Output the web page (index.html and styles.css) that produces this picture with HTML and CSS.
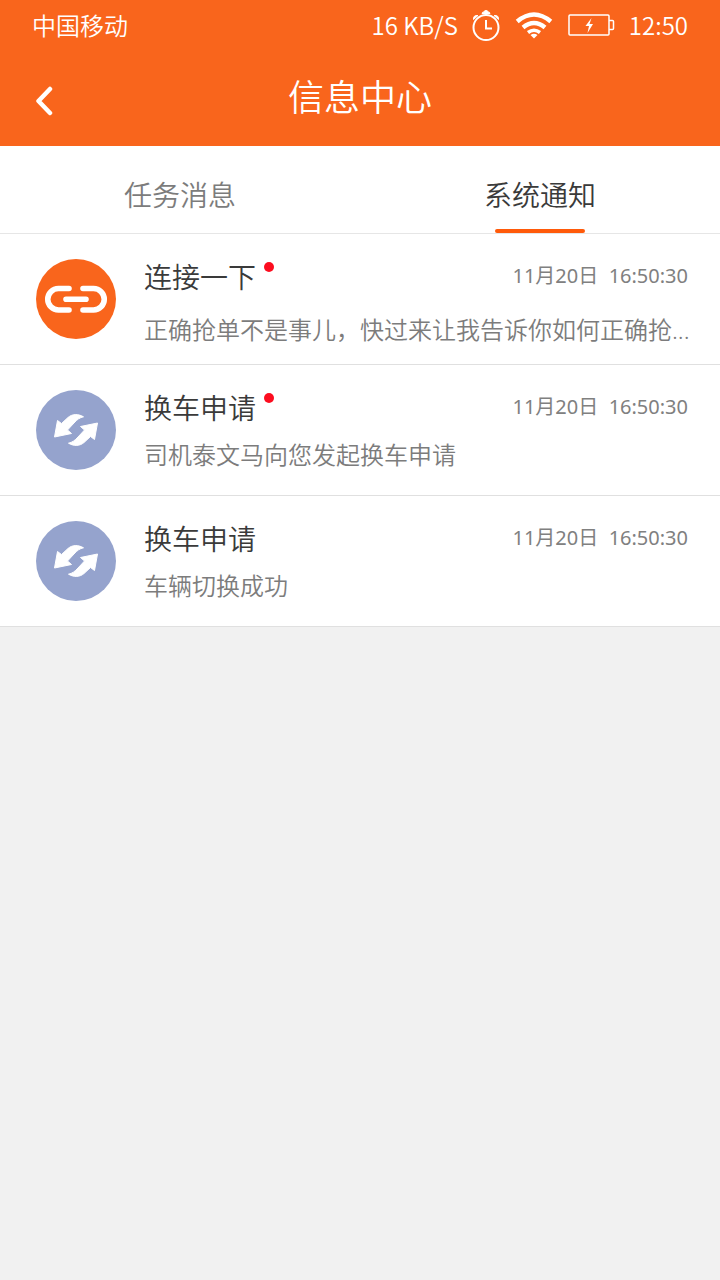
FILE: index.html
```
<!DOCTYPE html>
<html lang="zh-CN">
<head>
<meta charset="utf-8">
<meta name="viewport" content="width=device-width, initial-scale=1">
<title>信息中心</title>
<link rel="stylesheet" href="styles.css">
</head>
<body>
<header class="header">
  <div class="status">
    <span>中国移动</span>
    <div class="status-right">
      <span>16 KB/S</span>
      <svg class="clock" width="28" height="32" viewBox="0 0 28 32" aria-hidden="true">
        <g fill="none" stroke="#fff" stroke-width="2">
          <circle cx="14" cy="18.500" r="12.500"/>
          <path d="M14 11v8.500h6"/>
        </g>
        <path d="M10 4.500Q10 3 12 3Q12 1.500 14 1.500T16 3Q18 3 18 4.500ZM1.500 10.500Q1 6 6 6.500ZM26.500 10.500Q27 6 22 6.500Z" fill="#fff" stroke="#fff" stroke-linejoin="round"/>
      </svg>
      <svg class="wifi" width="38" height="28" viewBox="0 0 38 28" aria-hidden="true">
        <g fill="none" stroke="#fff" stroke-width="4.500">
          <path d="M2.200 10.500Q19-3.500 35.800 10.500"/>
          <path d="M8 16.500Q19 7.500 30 16.500"/>
          <path d="M13 21.500Q19 17 25 21.500" stroke-width="3.500"/>
        </g>
        <path d="M15.500 24Q19 21.500 22.500 24L19 27.500Z" fill="#fff"/>
      </svg>
      <svg class="battery" width="48" height="24" viewBox="0 0 48 24" aria-hidden="true">
        <rect x="2" y="2" width="40" height="20" rx="1" fill="none" stroke="#fff" stroke-width="1.500"/>
        <path d="M42 7.500h3.500q1 0 1 1v7q0 1-1 1H42" fill="none" stroke="#fff" stroke-width="1.500"/>
        <path d="M24.500 5L18.500 13h3.500L20.500 20L26 11h-3.500Z" fill="#fff"/>
      </svg>
      <span>12:50</span>
    </div>
  </div>
  <div class="titlebar">
    <button class="back" type="button" aria-label="返回">
      <svg width="18" height="30" viewBox="0 0 18 30" aria-hidden="true"><path d="M15 3L3.500 15L15 27" fill="none" stroke="#fff" stroke-width="4.500" stroke-linecap="round" stroke-linejoin="round"/></svg>
    </button>
    <h1 class="title">信息中心</h1>
  </div>
</header>
<nav class="tabs">
  <a class="tab" href="#tasks">任务消息</a>
  <a class="tab active" href="#system" aria-current="page">系统通知</a>
</nav>
<main class="list">
  <article class="item">
    <svg class="avatar" viewBox="0 0 80 80" aria-hidden="true">
      <circle cx="40" cy="40" r="40" fill="#f9651c"/>
      <path d="M33 29.500H22.500A10.500 10.500 0 0 0 22.500 51H33M47 29.500H57.500A10.500 10.500 0 0 1 57.500 51H47M30 40.200H50" fill="none" stroke="#fff" stroke-width="5.600" stroke-linecap="round"/>
    </svg>
    <div class="body">
      <div class="row"><h2 class="name unread">连接一下</h2><time class="time">11月20日&nbsp; 16:50:30</time></div>
      <p class="text spaced">正确抢单不是事儿，快过来让我告诉你如何正确抢...</p>
    </div>
  </article>
  <article class="item">
    <svg class="avatar" viewBox="0 0 80 80" aria-hidden="true">
      <circle cx="40" cy="40" r="40" fill="#95a3cd"/>
      <g id="swap" fill="#fff" stroke="#fff" stroke-linejoin="round">
        <path id="arrow" d="M47.500 26.800C42 23.500 36 24 32 27.500L25.500 33.500L21.500 30.500L18.500 47L35.500 43.500L31.500 40L38 33C41 29.500 44 27.500 47.500 26.800Z"/>
        <use href="#arrow" transform="rotate(180 40 40)"/>
      </g>
    </svg>
    <div class="body">
      <div class="row"><h2 class="name unread">换车申请</h2><time class="time">11月20日&nbsp; 16:50:30</time></div>
      <p class="text">司机泰文马向您发起换车申请</p>
    </div>
  </article>
  <article class="item">
    <svg class="avatar" viewBox="0 0 80 80" aria-hidden="true">
      <circle cx="40" cy="40" r="40" fill="#95a3cd"/>
      <use href="#swap"/>
    </svg>
    <div class="body">
      <div class="row"><h2 class="name">换车申请</h2><time class="time">11月20日&nbsp; 16:50:30</time></div>
      <p class="text">车辆切换成功</p>
    </div>
  </article>
</main>
</body>
</html>
```
FILE: styles.css
```
* { box-sizing: border-box; }
body {
  margin: 0;
  background: #f1f1f1;
  color: #3a3a3a;
  font-family: "Noto Sans CJK SC", sans-serif;
  font-weight: 350;
}
h1, h2, p { margin: 0; font-weight: 350; }
.header { background: #f9651c; color: #fff; }
.status {
  display: flex;
  justify-content: space-between;
  align-items: center;
  height: 50px;
  padding: 0 32px;
  font-size: 24px;
  line-height: 32px;
}
.status span { padding-bottom: 1px; }
.status-right { display: flex; align-items: center; }
.clock { margin-left: 14px; }
.wifi { margin-left: 15px; }
.battery { margin: 0 14px 0 14px; }
.titlebar {
  display: grid;
  grid-template-columns: 72px 1fr 72px;
  align-items: center;
  height: 96px;
}
.back {
  display: flex;
  padding: 6px 0 0 35px;
  border: 0;
  background: none;
}
.title {
  padding-bottom: 6px;
  font-size: 36px;
  line-height: 48px;
  text-align: center;
}
.tabs {
  display: flex;
  height: 88px;
  background: #fff;
  border-bottom: 1px solid #e6e6e6;
}
.tab {
  position: relative;
  flex: 1;
  padding-top: 28px;
  color: #7c7c7c;
  font-size: 28px;
  line-height: 40px;
  text-align: center;
  text-decoration: none;
}
.tab.active { color: #3a3a3a; }
.tab.active::after {
  content: "";
  position: absolute;
  bottom: 0;
  left: 50%;
  width: 90px;
  height: 4px;
  margin-left: -45px;
  border-radius: 2px;
  background: #ff5a0a;
}
.item {
  display: flex;
  gap: 28px;
  min-height: 131px;
  padding: 24px 28px 16px 36px;
  background: #fff;
  border-bottom: 1px solid #e0e0e0;
}
.avatar { flex: none; width: 80px; height: 80px; margin-top: 1px; }
.body { flex: 1; min-width: 0; }
.row { display: flex; justify-content: space-between; padding-right: 4px; }
.name { position: relative; font-size: 28px; line-height: 36px; }
.name.unread::after {
  content: "";
  position: absolute;
  top: 4px;
  right: -18px;
  width: 10px;
  height: 10px;
  border-radius: 50%;
  background: #fc0d1f;
}
.time {
  color: #808080;
  font-family: "Noto Sans", "Noto Sans CJK SC", sans-serif;
  font-size: 20px;
  font-weight: 400;
  line-height: 36px;
}
.text {
  margin-top: 12px;
  color: #7c7c7c;
  font-family: "Noto Sans", "Noto Sans CJK SC", sans-serif;
  font-size: 24px;
  line-height: 36px;
}
.text.spaced { margin-top: 18px; }
```
